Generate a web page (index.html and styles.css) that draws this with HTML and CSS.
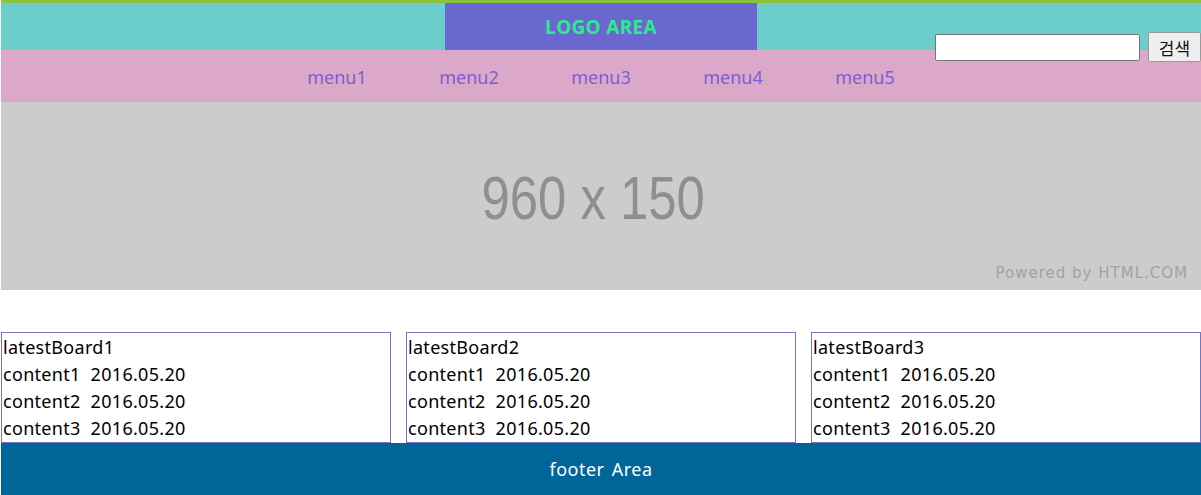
FILE: index.html
```html
<!DOCTYPE html>
<html lang="ko">
<head>
<meta charset="utf-8">
<title>Layout</title>
<link rel="stylesheet" href="styles.css">
</head>
<body>
<div class="page">
  <header class="header">
    <div class="logo">LOGO AREA</div>
    <form class="search">
      <input class="search-input" type="text">
      <button class="search-btn" type="button">검색</button>
    </form>
  </header>
  <nav class="nav">
    <a class="menu">menu1</a>
    <a class="menu">menu2</a>
    <a class="menu">menu3</a>
    <a class="menu">menu4</a>
    <a class="menu">menu5</a>
  </nav>
  <section class="banner">
    <span class="banner-size">960 x 150</span>
    <span class="banner-credit">Powered by HTML.COM</span>
  </section>
  <section class="boards">
    <div class="board">
      <div>latestBoard1</div>
      <div>content1 2016.05.20</div>
      <div>content2 2016.05.20</div>
      <div>content3 2016.05.20</div>
    </div>
    <div class="board">
      <div>latestBoard2</div>
      <div>content1 2016.05.20</div>
      <div>content2 2016.05.20</div>
      <div>content3 2016.05.20</div>
    </div>
    <div class="board">
      <div>latestBoard3</div>
      <div>content1 2016.05.20</div>
      <div>content2 2016.05.20</div>
      <div>content3 2016.05.20</div>
    </div>
  </section>
  <footer class="footer">footer Area</footer>
</div>
</body>
</html>
```
FILE: styles.css
```css
html, body {
  margin: 0;
  padding: 0;
  background: #ffffff;
}
body {
  font-family: "Noto Sans", "Noto Sans CJK KR", sans-serif;
  overflow: hidden;
}
.page {
  width: 1200px;
  margin-left: 1px;
  border-top: 3px solid #8cc23c;
  position: relative;
}
.header {
  height: 47px;
  background: #6ccdcd;
  display: flex;
  justify-content: center;
}
.logo {
  width: 312px;
  background: #6a67cf;
  color: #2eea8e;
  font-family: "Open Sans", "Noto Sans", sans-serif;
  font-weight: 700;
  font-size: 19px;
  letter-spacing: 0.3px;
  display: flex;
  align-items: center;
  justify-content: center;
}
.search {
  position: absolute;
  top: 29px;
  right: 0;
  display: flex;
  align-items: center;
  gap: 8px;
  margin: 0;
}
.search-input {
  width: 205px;
  height: 27px;
  box-sizing: border-box;
  border: 1px solid #767676;
  border-radius: 2px;
  padding: 0;
  background: #fff;
}
.search-btn {
  width: 53px;
  height: 30px;
  box-sizing: border-box;
  border: 1px solid #9a9a9a;
  border-radius: 2px;
  background: #efefef;
  font-family: "Noto Sans CJK KR", sans-serif;
  font-size: 17px;
  color: #111;
  padding: 0;
}
.nav {
  height: 52px;
  background: #dca8c9;
  display: flex;
  justify-content: center;
  align-items: center;
}
.menu {
  width: 132px;
  text-align: center;
  color: #7a5fd0;
  font-family: "Noto Sans", sans-serif;
  font-size: 18px;
  padding-top: 1px;
}
.banner {
  height: 188px;
  background: #cccccc;
  position: relative;
  display: flex;
  align-items: center;
  justify-content: center;
}
.banner-size {
  font-family: "Liberation Sans", Arial, sans-serif;
  font-size: 62px;
  line-height: 62px;
  color: #8f8f8f;
  margin-left: -16px;
  margin-top: 4px;
  transform: scaleX(0.82);
}
.banner-credit {
  position: absolute;
  right: 13px;
  bottom: 8px;
  font-family: "DejaVu Sans", sans-serif;
  font-size: 15px;
  letter-spacing: 1px;
  color: #a2a2a2;
}
.boards {
  margin-top: 42px;
  display: flex;
  justify-content: space-between;
}
.board {
  width: 390px;
  box-sizing: border-box;
  border: 1px solid #7474c8;
  padding: 1px 0 0 1px;
  font-size: 18px;
  line-height: 27px;
  letter-spacing: 0.3px;
  word-spacing: 5px;
  color: #000;
  height: 111px;
  overflow: hidden;
}
.board div {
  height: 27px;
  white-space: nowrap;
}
.footer {
  height: 52px;
  background: #006699;
  color: #fff;
  font-size: 18px;
  letter-spacing: 0.5px;
  word-spacing: 2px;
  display: flex;
  align-items: center;
  justify-content: center;
}
```
